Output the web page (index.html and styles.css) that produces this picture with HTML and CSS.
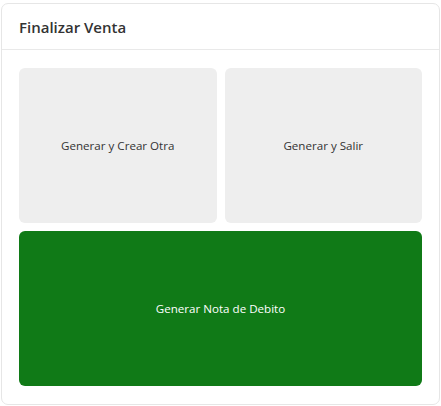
FILE: index.html
```html
<!DOCTYPE html>
<html lang="es">
<head>
<meta charset="utf-8">
<link rel="stylesheet" href="styles.css">
</head>
<body>
<div class="card">
  <div class="card-header">Finalizar Venta</div>
  <div class="card-body">
    <div class="grid">
      <button class="btn btn-light">Generar y Crear Otra</button>
      <button class="btn btn-light">Generar y Salir</button>
      <button class="btn btn-green wide">Generar Nota de Debito</button>
    </div>
  </div>
</div>
</body>
</html>
```

FILE: styles.css
```css
html, body {
  margin: 0;
  padding: 0;
  background: #fff;
}
body {
  padding: 3px 1px 0 1px;
  font-family: "Open Sans", "Noto Sans", sans-serif;
}
.card {
  border: 1px solid #e6e6e6;
  border-radius: 7px;
  background: #fff;
  height: 402px;
  box-sizing: border-box;
  display: flex;
  flex-direction: column;
}
.card-header {
  height: 46px;
  box-sizing: border-box;
  padding: 13px 17px 0 17px;
  border-bottom: 1px solid #e9e9e9;
  font-size: 15px;
  font-weight: 600;
  color: #333;
  line-height: 20px;
}
.card-body {
  padding: 18px 17px;
  flex: 1;
}
.grid {
  display: grid;
  grid-template-columns: 1fr 1fr;
  grid-template-rows: 155px 155px;
  gap: 8px;
}
.btn {
  border: none;
  border-radius: 6px;
  font-family: "Open Sans", "Noto Sans", sans-serif;
  font-size: 11.6px;
  cursor: pointer;
}
.btn-light {
  background: #eeeeee;
  color: #333;
}
.btn-green {
  background: #107a17;
  color: #fff;
}
.wide {
  grid-column: 1 / 3;
}
```
